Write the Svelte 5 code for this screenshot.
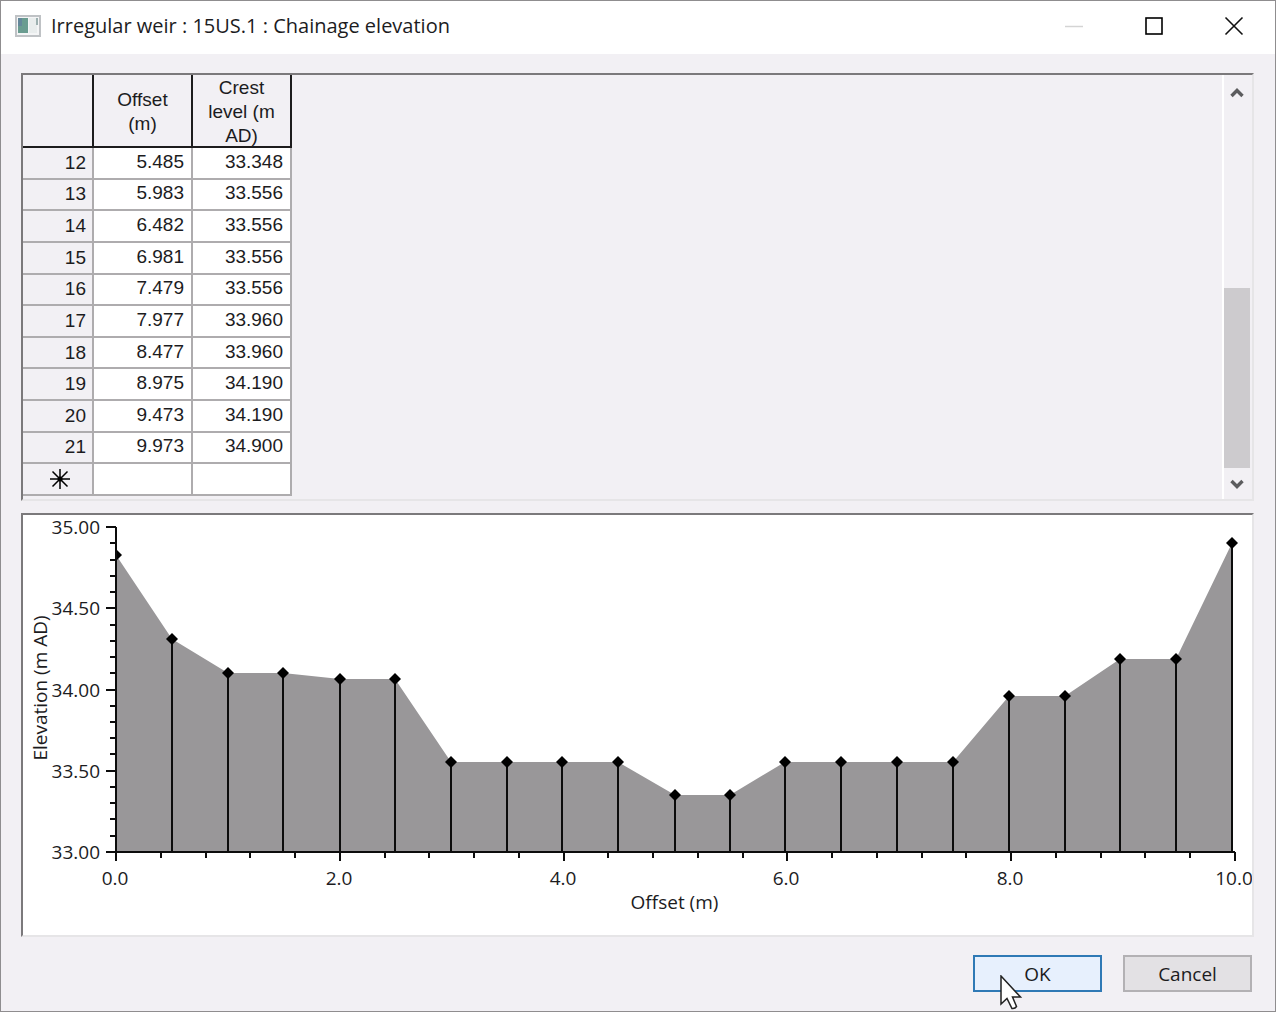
<script lang="ts">
  interface Point {
    offset: number;
    level: number;
  }

  const points: Point[] = [
    { offset: 0.0, level: 34.83 },
    { offset: 0.5, level: 34.31 },
    { offset: 0.997, level: 34.1 },
    { offset: 1.496, level: 34.1 },
    { offset: 2.0, level: 34.066 },
    { offset: 2.493, level: 34.066 },
    { offset: 2.992, level: 33.556 },
    { offset: 3.497, level: 33.556 },
    { offset: 3.989, level: 33.556 },
    { offset: 4.488, level: 33.556 },
    { offset: 4.993, level: 33.348 },
    { offset: 5.485, level: 33.348 },
    { offset: 5.983, level: 33.556 },
    { offset: 6.482, level: 33.556 },
    { offset: 6.981, level: 33.556 },
    { offset: 7.479, level: 33.556 },
    { offset: 7.977, level: 33.96 },
    { offset: 8.477, level: 33.96 },
    { offset: 8.975, level: 34.19 },
    { offset: 9.473, level: 34.19 },
    { offset: 9.973, level: 34.9 },
  ];

  // The grid is scrolled to the end, so only the last rows show
  const firstRow = 12;
  const rows = points
    .map((p, i) => ({ ...p, num: i + 1 }))
    .filter((r) => r.num >= firstRow);

  // ── Chart geometry ────────────────────────────────────────────────────

  const left = 93;
  const right = 1212;
  const top = 12;
  const bottom = 337;

  const sx = (v: number) => Math.round(left + (v / 10) * (right - left));
  const sy = (v: number) => Math.round(bottom - ((v - 33) / 2) * (bottom - top));

  const xTicks = Array.from({ length: 26 }, (_, i) => ({
    value: i * 0.4,
    major: i % 5 === 0,
  }));
  const yTicks = Array.from({ length: 21 }, (_, i) => ({
    value: 33 + i * 0.1,
    major: i % 5 === 0,
  }));

  const area =
    `${left},${bottom} ` +
    points.map((p) => `${sx(p.offset)},${sy(p.level)}`).join(" ") +
    ` ${sx(points[points.length - 1].offset)},${bottom}`;
</script>

<div class="dialog">
  <header class="titlebar">
    <svg class="app-icon" width="28" height="24" viewBox="0 0 28 24" aria-hidden="true">
      <rect x="2" y="2" width="24" height="20" fill="#f4f5f6" stroke="#bfc2c5" stroke-width="2" />
      <rect x="4" y="4" width="10" height="15" fill="#6a9c90" />
      <rect x="4" y="4" width="4" height="8" fill="#64879a" />
      <rect x="15" y="4" width="8" height="15" fill="#e9eded" />
      <rect x="22" y="4" width="2" height="7" fill="#9db0b0" />
    </svg>
    <h1>Irregular weir : 15US.1 : Chainage elevation</h1>
    <div class="window-buttons">
      <button type="button" aria-label="Minimize" disabled>
        <svg width="20" height="20" viewBox="0 0 20 20"><path d="M1 10.5H19" stroke="#d4d4d4" stroke-width="1.5" /></svg>
      </button>
      <button type="button" aria-label="Maximize">
        <svg width="20" height="20" viewBox="0 0 20 20"><rect x="2" y="2" width="16" height="16" fill="none" stroke="#000" stroke-width="1.6" /></svg>
      </button>
      <button type="button" aria-label="Close">
        <svg width="20" height="20" viewBox="0 0 20 20"><path d="M1.5 1.5L18.5 18.5M18.5 1.5L1.5 18.5" stroke="#111" stroke-width="1.6" /></svg>
      </button>
    </div>
  </header>

  <main>
    <section class="panel grid-panel">
      <table>
        <thead>
          <tr>
            <th class="num" aria-label="Row"></th>
            <th scope="col"><div>Offset<br />(m)</div></th>
            <th scope="col"><div>Crest<br />level (m<br />AD)</div></th>
          </tr>
        </thead>
        <tbody>
          {#each rows as row (row.num)}
            <tr>
              <th class="num" scope="row">{row.num}</th>
              <td>{row.offset.toFixed(3)}</td>
              <td>{row.level.toFixed(3)}</td>
            </tr>
          {/each}
          <tr>
            <th class="num new" scope="row" aria-label="New row">
              <svg width="20" height="20" viewBox="0 0 20 20">
                <path d="M10 0V20M0 10H20M2.5 2.5L17.5 17.5M17.5 2.5L2.5 17.5" stroke="#000" stroke-width="1.5" />
                <circle cx="10" cy="10" r="2.5" />
              </svg>
            </th>
            <td></td>
            <td></td>
          </tr>
        </tbody>
      </table>

      <div class="scrollbar">
        <button type="button" aria-label="Scroll up">
          <svg width="14" height="12" viewBox="0 0 14 12"><path d="M1.5 9L7 3.5L12.5 9" fill="none" stroke="#5c5c5e" stroke-width="3.4" /></svg>
        </button>
        <div class="track"><div class="thumb"></div></div>
        <button type="button" aria-label="Scroll down">
          <svg width="14" height="12" viewBox="0 0 14 12"><path d="M1.5 3L7 8.5L12.5 3" fill="none" stroke="#5c5c5e" stroke-width="3.4" /></svg>
        </button>
      </div>
    </section>

    <section class="panel chart-panel">
      <svg class="chart" viewBox="0 0 1229 420" role="img" aria-label="Elevation against offset">
        <defs>
          <clipPath id="plot">
            <rect x={left} y="0" width={right - left + 10} height={bottom} />
          </clipPath>
        </defs>

        <polygon points={area} fill="#999799" />
        <g clip-path="url(#plot)">
          {#each points as p}
            <path class="drop" d="M{sx(p.offset)} {sy(p.level)}V{bottom}" />
            <path d="M{sx(p.offset)} {sy(p.level) - 6}l6 6l-6 6l-6 -6z" />
          {/each}
        </g>

        <path class="axis" d="M{left} {top}V{bottom}H{right}" />
        {#each yTicks as t}
          <path class="axis" d="M{left - (t.major ? 10 : 6)} {sy(t.value)}H{left}" />
          {#if t.major}
            <text x={left - 16} y={sy(t.value) + 7} text-anchor="end">{t.value.toFixed(2)}</text>
          {/if}
        {/each}
        {#each xTicks as t}
          <path class="axis" d="M{sx(t.value)} {bottom}v{t.major ? 9 : 6}" />
          {#if t.major}
            <text x={sx(t.value) - 1} y={bottom + 33} text-anchor="middle">{t.value.toFixed(1)}</text>
          {/if}
        {/each}

        <text x={(left + right) / 2 - 1} y={bottom + 57} text-anchor="middle">Offset (m)</text>
        <text transform="translate(24 173) rotate(-90)" text-anchor="middle">Elevation (m AD)</text>
      </svg>
    </section>

    <footer>
      <button type="button" class="ok">
        OK
        <svg class="pointer" width="24" height="36" viewBox="0 0 24 36" aria-hidden="true">
          <path d="M1 1V29L7 23.5L12 33.5Q15 34 16.5 31.5L12.5 22H20.5Z" fill="#fff" stroke="#222" stroke-width="1.5" />
        </svg>
      </button>
      <button type="button">Cancel</button>
    </footer>
  </main>
</div>

<style>
  :global(body) {
    margin: 0;
  }

  .dialog {
    box-sizing: border-box;
    min-height: 100vh;
    display: flex;
    flex-direction: column;
    border: 1px solid #8f8d8f;
    background: #f2f0f4;
    color: #1c1c1e;
    font-family: "Open Sans", "Noto Sans", sans-serif;
    font-size: 19px;
  }

  button {
    font: inherit;
    color: inherit;
    padding: 0;
  }

  svg {
    display: block;
  }

  .titlebar {
    box-sizing: border-box;
    display: flex;
    align-items: center;
    height: 53px;
    padding: 0 1px 3px 13px;
    background: #fff;
  }

  h1 {
    flex: 1;
    margin: 0 0 0 9px;
    font-size: 20px;
    font-weight: 400;
    line-height: 24px;
  }

  .window-buttons {
    display: flex;
    align-self: stretch;
  }

  .window-buttons button {
    display: grid;
    place-items: center;
    width: 80px;
    border: 0;
    background: none;
  }

  main {
    flex: 1;
    display: flex;
    flex-direction: column;
    padding: 19px 21px 19px 20px;
  }

  .panel {
    border: 2px solid;
    border-color: #7b797b #e6e5e7 #e6e5e7 #7b797b;
  }

  .grid-panel {
    flex: 1;
    display: flex;
    justify-content: space-between;
    margin-bottom: 12px;
  }

  table {
    margin-bottom: 3px;
    border-spacing: 0;
    table-layout: fixed;
    width: 269px;
    font-family: "Liberation Sans", Arial, sans-serif;
    line-height: 24px;
  }

  th,
  td {
    box-sizing: border-box;
    height: 31px;
    padding: 0 7px 2px 0;
    border: solid #aeacae;
    border-width: 0 2px 2px 0;
    font-weight: 400;
    text-align: right;
  }

  td {
    background: #fff;
  }

  .num {
    width: 71px;
    padding-bottom: 0;
    padding-right: 6px;
  }

  .new svg {
    margin-left: 27px;
  }

  thead th {
    height: 73px;
    padding: 0;
    border-color: #1d1c1d;
    text-align: center;
  }

  thead div {
    box-sizing: border-box;
    display: flex;
    flex-direction: column;
    justify-content: center;
    height: 71px;
    padding-top: 3px;
    overflow: hidden;
  }

  .scrollbar {
    display: flex;
    flex-direction: column;
    width: 26px;
    padding: 2px 2px 0 0;
    border-left: 2px solid #fff;
  }

  .scrollbar button {
    display: grid;
    place-items: center;
    height: 31px;
    border: 0;
    background: none;
  }

  .track {
    flex: 1;
    display: flex;
    flex-direction: column;
    justify-content: flex-end;
  }

  .thumb {
    flex: 0 0 50%;
    background: #cdcbce;
  }

  .chart-panel {
    background: #fff;
  }

  .chart {
    width: 100%;
    height: auto;
  }

  .chart text {
    fill: #1c1c1e;
    font-size: 19px;
  }

  .axis,
  .drop {
    fill: none;
    stroke: #0c0c0c;
    stroke-width: 2;
  }

  footer {
    display: flex;
    justify-content: flex-end;
    gap: 21px;
    margin-top: 18px;
    padding-right: 2px;
  }

  footer button {
    width: 129px;
    height: 37px;
    border: 2px solid #b3b1b4;
    background: #e3e1e4;
  }

  footer .ok {
    position: relative;
    border-color: #2f79b5;
    background: #e7f0fd;
  }

  .pointer {
    position: absolute;
    left: 25px;
    top: 18px;
  }
</style>
